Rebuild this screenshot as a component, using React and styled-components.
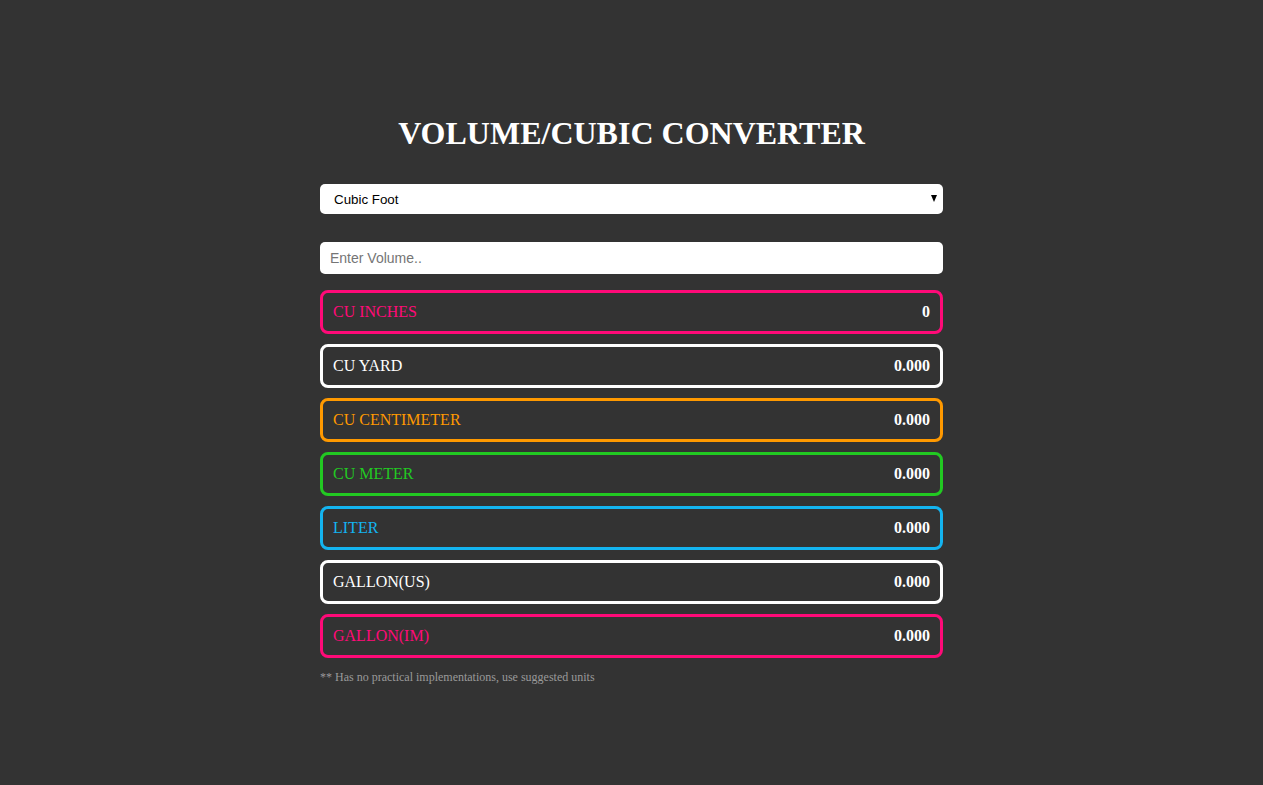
import React, { useState } from "react";
import styled, { createGlobalStyle } from "styled-components";

const Global = createGlobalStyle`
  html, body { margin: 0; padding: 0; background: #333333; }
  body { font-family: "Liberation Serif", "Times New Roman", serif; }
`;

const Page = styled.div`
  min-height: 785px;
  background: #333333;
  padding-top: 113px;
  box-sizing: border-box;
`;

const Container = styled.div`
  width: 623px;
  margin: 0 auto;
  display: flex;
  flex-direction: column;
`;

const Title = styled.h1`
  margin: 0 0 31px;
  text-align: center;
  color: #ffffff;
  font-family: "Liberation Serif", "Times New Roman", serif;
  font-weight: bold;
  font-size: 32px;
  line-height: 40px;
`;

const SelectWrap = styled.div`
  position: relative;
  height: 30px;
  margin-bottom: 28px;
`;

const Select = styled.select`
  appearance: none;
  -webkit-appearance: none;
  width: 100%;
  height: 30px;
  border: none;
  border-radius: 5px;
  background: #ffffff;
  color: #000;
  font-family: "Liberation Sans", Arial, sans-serif;
  font-size: 13.33px;
  padding: 0 0 0 14px;
  outline: none;
  display: block;
`;

const Arrow = styled.span`
  position: absolute;
  right: 6px;
  top: 11px;
  width: 0;
  height: 0;
  border-left: 3.5px solid transparent;
  border-right: 3.5px solid transparent;
  border-top: 7px solid #000;
  pointer-events: none;
`;

const Input = styled.input`
  width: 100%;
  height: 32px;
  box-sizing: border-box;
  border: none;
  border-radius: 5px;
  background: #fff;
  font-family: "Liberation Sans", Arial, sans-serif;
  font-size: 14px;
  padding: 0 10px;
  outline: none;
  margin-bottom: 16px;
  &::placeholder { color: #757575; }
`;

const List = styled.div`
  display: flex;
  flex-direction: column;
  gap: 10px;
`;

const Row = styled.div`
  height: 44px;
  box-sizing: border-box;
  border: 3px solid ${(p) => p.$color};
  border-radius: 8px;
  padding: 0 10px;
  display: flex;
  align-items: center;
  justify-content: space-between;
  font-family: "Liberation Serif", "Times New Roman", serif;
  font-size: 16px;
`;

const Label = styled.span`
  color: ${(p) => p.$color};
`;

const Value = styled.span`
  color: #ffffff;
  font-weight: bold;
`;

const Note = styled.p`
  margin: 12px 0 0;
  color: #9a9a9a;
  font-size: 12px;
  font-family: "Liberation Serif", "Times New Roman", serif;
`;

const PINK = "#ff0a78";
const rows = [
  { label: "CU INCHES", color: PINK, value: "0" },
  { label: "CU YARD", color: "#ffffff", value: "0.000" },
  { label: "CU CENTIMETER", color: "#ff9900", value: "0.000" },
  { label: "CU METER", color: "#22c922", value: "0.000" },
  { label: "LITER", color: "#14b4f0", value: "0.000" },
  { label: "GALLON(US)", color: "#ffffff", value: "0.000" },
  { label: "GALLON(IM)", color: PINK, value: "0.000" },
];

export default function App() {
  const [unit, setUnit] = useState("ft");
  return (
    <Page>
      <Global />
      <Container>
        <Title>VOLUME/CUBIC CONVERTER</Title>
        <SelectWrap>
          <Select value={unit} onChange={(e) => setUnit(e.target.value)}>
            <option value="ft">Cubic Foot</option>
            <option value="in">Cubic Inch</option>
            <option value="yd">Cubic Yard</option>
          </Select>
          <Arrow />
        </SelectWrap>
        <Input placeholder="Enter Volume.." />
        <List>
          {rows.map((r) => (
            <Row key={r.label} $color={r.color}>
              <Label $color={r.color}>{r.label}</Label>
              <Value>{r.value}</Value>
            </Row>
          ))}
        </List>
        <Note>** Has no practical implementations, use suggested units</Note>
      </Container>
    </Page>
  );
}
